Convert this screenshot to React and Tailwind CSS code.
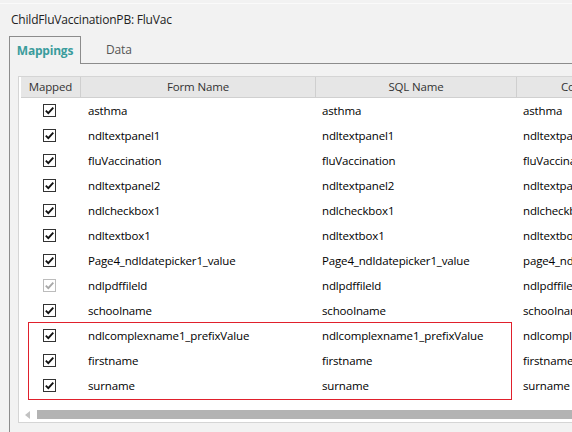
import React from "react";

const rows = [
  ["asthma", "asthma", "asthma", false],
  ["ndltextpanel1", "ndltextpanel1", "ndltextpanel1", false],
  ["fluVaccination", "fluVaccination", "fluVaccination", false],
  ["ndltextpanel2", "ndltextpanel2", "ndltextpanel2", false],
  ["ndlcheckbox1", "ndlcheckbox1", "ndlcheckbox1", false],
  ["ndltextbox1", "ndltextbox1", "ndltextbox1", false],
  ["Page4_ndldatepicker1_value", "Page4_ndldatepicker1_value", "page4_ndldatepicker1_value", false],
  ["ndlpdffileld", "ndlpdffileld", "ndlpdffileld", true],
  ["schoolname", "schoolname", "schoolname", false],
  ["ndlcomplexname1_prefixValue", "ndlcomplexname1_prefixValue", "ndlcomplexname1_prefixValue", false],
  ["firstname", "firstname", "firstname", false],
  ["surname", "surname", "surname", false],
];

function Check({ disabled }) {
  return (
    <div
      className={`w-[13px] h-[13px] border bg-white flex items-center justify-center ${
        disabled ? "border-[#bcbcbc]" : "border-[#333333]"
      }`}
    >
      <svg width="11" height="11" viewBox="0 0 11 11">
        <path
          d="M1.8 5.6 L4.3 8.1 L9.3 2.6"
          fill="none"
          stroke={disabled ? "#a8a8a8" : "#111111"}
          strokeWidth="1.9"
        />
      </svg>
    </div>
  );
}

export default function App() {
  return (
    <div
      className="relative w-[572px] h-[432px] overflow-hidden bg-[#f2f2f2] text-[11.5px] tracking-[-0.15px]"
      style={{ fontFamily: '"Open Sans", "Noto Sans", sans-serif' }}
    >
      <div className="h-[3px]" />
      <div className="h-px bg-[#fafafa]" />
      <div className="h-[32px] flex items-center pl-[11px] text-[12px] text-[#222] tracking-[-0.2px]">
        ChildFluVaccinationPB: FluVac
      </div>
      {/* tabs */}
      <div className="flex h-[28px]">
        <div className="ml-[9px] w-[72px] shrink-0 border-l border-t border-r border-[#8c8c8c] flex items-center justify-center font-bold text-[12px] text-[#3a9c9c] tracking-[-0.2px] pt-[1px]">
          Mappings
        </div>
        <div className="flex-1 border-b border-[#8c8c8c] flex items-center pl-[25px] text-[12px] text-[#555] pt-[1px]">
          Data
        </div>
      </div>
      {/* panel */}
      <div className="ml-[9px] border-l border-[#8c8c8c] pl-[8px] pt-[12px] h-[400px]">
        <div className="relative w-[640px] border-l border-t border-b border-[#d5d5d5] bg-white pl-[2px]">
          {/* header */}
          <div className="flex h-[21px] bg-[#e6e6e6] border-b border-[#d0d0d0] text-[#333] whitespace-nowrap">
            <div className="w-[60px] shrink-0 border-r border-[#cfcfcf] flex items-center justify-center">Mapped</div>
            <div className="w-[235px] shrink-0 border-r border-[#cfcfcf] flex items-center justify-center">Form Name</div>
            <div className="w-[201px] shrink-0 border-r border-[#cfcfcf] flex items-center justify-center">SQL Name</div>
            <div className="w-[130px] shrink-0 flex items-center pl-[44px]">Column Name</div>
          </div>
          {rows.map(([f, s, c, dis], i) => (
            <div key={i} className="flex h-[25px] items-center text-black whitespace-nowrap">
              <div className="w-[60px] shrink-0 flex items-center pl-[22px]">
                <Check disabled={dis} />
              </div>
              <div className="w-[235px] shrink-0 pl-[7px] overflow-hidden">{f}</div>
              <div className="w-[201px] shrink-0 pl-[6px] overflow-hidden">{s}</div>
              <div className="w-[130px] shrink-0 pl-[6px] overflow-hidden">{c}</div>
            </div>
          ))}
          {/* scrollbar */}
          <div className="h-[24px] flex items-start pt-[12px]">
            <div className="w-[16px] shrink-0 h-[9px] flex items-center justify-end pr-[6px]">
              <svg width="6" height="8" viewBox="0 0 6 8">
                <path d="M5 0 L0 4 L5 8 Z" fill="#c2c2c2" />
              </svg>
            </div>
            <div className="flex-1 h-[9px] bg-[#b3b3b3]" />
          </div>
          {/* red annotation */}
          <div className="absolute left-[9px] top-[245px] w-[484px] h-[78px] border-[1.5px] border-[#e0202c]" />
        </div>
      </div>
    </div>
  );
}
